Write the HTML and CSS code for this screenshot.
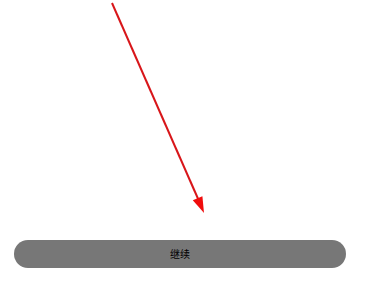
FILE: index.html
```html
<!DOCTYPE html>
<html>
<head>
<meta charset="utf-8">
<link rel="stylesheet" href="styles.css">
</head>
<body>
<div class="page">
  <svg class="canvas" width="367" height="240" viewBox="0 0 367 240">
    <line x1="112" y1="3" x2="199" y2="201" stroke="#d8161a" stroke-width="2"/>
    <polygon points="204,213 192.8,200.3 202.4,196.2" fill="#f00c0c"/>
  </svg>
  <button class="btn">继续</button>
</div>
</body>
</html>
```
FILE: styles.css
```css
html, body {
  margin: 0;
  padding: 0;
  background: #fff;
}
.page {
  width: 367px;
  height: 282px;
  display: flex;
  flex-direction: column;
}
.canvas {
  display: block;
}
.btn {
  margin: 0 21px 0 14px;
  height: 28px;
  border: none;
  border-radius: 14px;
  background: #777777;
  color: #000;
  font-family: "Noto Sans CJK SC", sans-serif;
  font-size: 10px;
  padding: 0;
  line-height: 28px;
}
```
